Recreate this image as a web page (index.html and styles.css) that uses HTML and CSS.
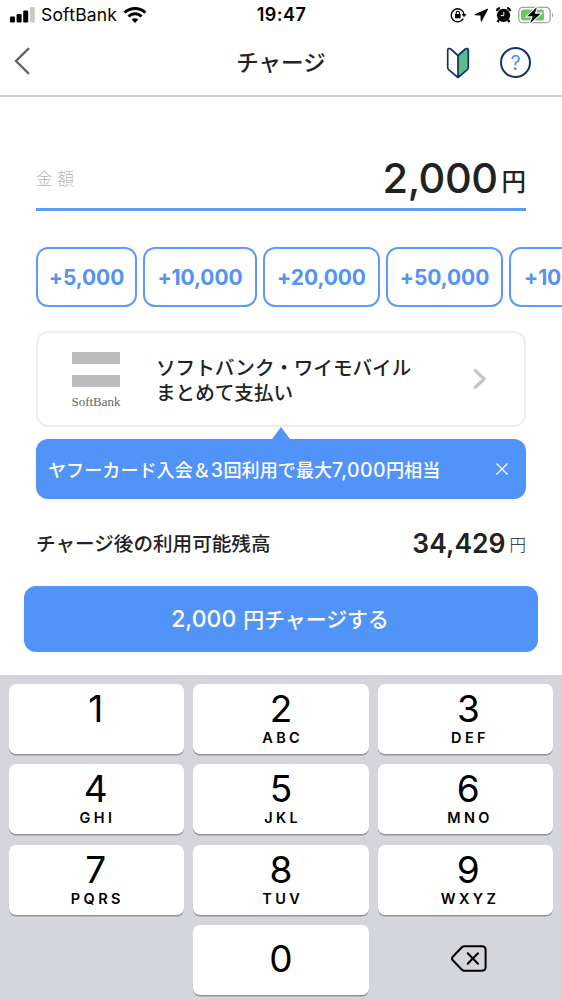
FILE: index.html
```html
<!DOCTYPE html>
<html lang="ja">
<head>
<meta charset="utf-8">
<title>チャージ</title>
<link rel="stylesheet" href="styles.css">
</head>
<body>
<div class="status">
  <div class="status-left">
    <svg width="26" height="16" viewBox="0 0 26 16"><rect x="0" y="9.500" width="5" height="6" rx="1.200"/><rect x="6.600" y="7" width="5" height="8.500" rx="1.200"/><rect x="13.200" y="3.500" width="5" height="12" rx="1.200"/><rect x="19.800" y="0" width="5" height="15.500" rx="1.200" fill="#c9c9c9"/></svg>
    <span class="carrier">SoftBank</span>
    <svg class="wifi" width="24" height="18" viewBox="0 0 24 18" fill="none" stroke="#000" stroke-width="3"><path d="M1.600 6.600a15 15 0 0 1 20.800 0"/><path d="M5.500 10.500a9.300 9.300 0 0 1 13 0"/><path d="M12 17l-3.300-3.400a4.700 4.700 0 0 1 6.600 0z" fill="#000" stroke="none"/></svg>
  </div>
  <div class="clock">19:47</div>
  <div class="status-right">
    <svg width="17" height="16" viewBox="0 0 17 16" fill="none" stroke="#000" stroke-width="1.400"><path d="M13.300 11.600A6.500 6.500 0 1 1 14 6.800"/><path d="M11.500 7h5L14 10.200z" fill="#000" stroke="none"/><rect x="5" y="7" width="5.600" height="4.200" rx=".5" fill="#000" stroke="none"/><path d="M6.200 7.300V5.800a1.600 1.600 0 0 1 3.200 0v1.500" stroke-width="1.100"/></svg>
    <svg class="arrow" width="15" height="15" viewBox="0 0 15 15"><path d="M13.300.7.800 6.300q-.8.600.1.900l5.500.4.400 5.600q.3.900.9.100L14 1.500q.2-1-.7-.8z"/></svg>
    <svg class="alarm" width="15" height="16" viewBox="0 0 15 16"><circle cx="7.500" cy="8.300" r="6.600"/><path d="M1.200 4.200Q.9 1.500 3.900 1.200M13.800 4.200Q14.100 1.500 11.100 1.200M3 13l-1.500 2M12 13l1.500 2" stroke="#000" stroke-width="2.300" fill="none"/><path d="M7.800 4.800v3.800H4.800" stroke="#fff" stroke-width="1" fill="none"/></svg>
    <svg class="battery" width="36" height="18" viewBox="0 0 36 18"><rect x=".8" y="1.300" width="31.400" height="15.400" rx="4.300" fill="#fff" stroke="#a3a3a3" stroke-width="1.300"/><rect x="3" y="3.500" width="23" height="11" rx="2.300" fill="#66c867"/><path d="M34 6.500q2.300 2.500 0 5z" fill="#a3a3a3"/><path class="bolt" d="M19 .9 9.400 10.300h5.300l-2.600 7L22.700 7.700h-6z"/></svg>
  </div>
</div>
<header class="header">
  <svg class="back" width="18" height="30" viewBox="0 0 18 30" fill="none" stroke="#666" stroke-width="2.400"><path d="M16 2.200 3 15l13 12.800"/></svg>
  <h1>チャージ</h1>
  <div class="header-icons">
    <svg width="24" height="32" viewBox="0 0 24 32"><path d="M12 8.500 19.300 2q2.700-1.600 3 1v17.500q0 1.300-1.200 2.400L12 30.500z" fill="#5bbd80"/><path d="M12 8.500 4.700 2Q2 .8 1.700 3v17.500q0 1.300 1.200 2.400L12 30.500l9.100-7.600q1.200-1.100 1.200-2.400V3q-.3-2.200-3-1zM12 8.500v22" fill="none" stroke="#172f70" stroke-width="1.700" stroke-linejoin="round"/></svg>
    <div class="help">?</div>
  </div>
</header>
<main>
  <div class="amount"><span class="amount-label">金額</span><span class="amount-value">2,000<span class="yen">円</span></span></div>
  <div class="chips">
    <div class="chip c5">+5,000</div><div class="chip c10">+10,000</div><div class="chip c20">+20,000</div><div class="chip c20">+50,000</div><div class="chip c100">+10</div>
  </div>
  <div class="card">
    <div class="logo"><i></i><i></i><span>SoftBank</span></div>
    <div class="method">ソフトバンク・ワイモバイル<br>まとめて支払い</div>
    <svg class="next" width="14" height="22" viewBox="0 0 14 22" fill="none" stroke="#c4c4c6" stroke-width="3.200" stroke-linecap="round" stroke-linejoin="round"><path d="m2.200 2.600 9 8.400-9 8.400"/></svg>
  </div>
  <div class="promo"><span>ヤフーカード入会＆<em>3</em>回利用で最大<em>7,000</em>円相当</span>
    <svg width="12" height="12" viewBox="0 0 12 12" stroke="#fff" stroke-width="1.200"><path d="m.5.500 11 11M11.500.500l-11 11"/></svg>
  </div>
  <div class="balance"><span>チャージ後の利用可能残高</span><span class="sum">34,429<small>円</small></span></div>
  <div class="submit"><span class="submit-num">2,000</span>円チャージする</div>
</main>
<div class="keypad">
  <div class="key"><b>1</b></div>
  <div class="key"><b>2</b><span>ABC</span></div>
  <div class="key right"><b>3</b><span>DEF</span></div>
  <div class="key"><b>4</b><span>GHI</span></div>
  <div class="key"><b>5</b><span>JKL</span></div>
  <div class="key right"><b>6</b><span>MNO</span></div>
  <div class="key"><b>7</b><span>PQRS</span></div>
  <div class="key"><b>8</b><span>TUV</span></div>
  <div class="key right"><b>9</b><span>WXYZ</span></div>
  <div></div>
  <div class="key zero"><b>0</b></div>
  <div class="delete"><svg width="36" height="27" viewBox="0 0 36 27" fill="none" stroke="#000" stroke-width="2" stroke-linejoin="round"><path d="M13.500 1.300H31q3.600 0 3.600 3.600v17.200q0 3.600-3.600 3.600H13.500q-1.500 0-2.600-1L1.800 15.200q-1.600-1.700 0-3.400l9.100-9.500q1.100-1 2.600-1z"/><path d="m16.700 8.200 10.300 10.600M27 8.200 16.700 18.800" stroke-linecap="round"/></svg></div>
</div>
</body>
</html>
```
FILE: styles.css
```css
* { box-sizing: border-box; }
body {
  margin: 0;
  width: 562px;
  height: 999px;
  overflow: hidden;
  background: #fff;
  color: #222;
  font-family: Inter, "Noto Sans CJK JP", sans-serif;
}
svg { display: block; flex: none; }
.status {
  height: 30px;
  display: grid;
  grid-template-columns: 1fr auto 1fr;
  align-items: center;
  padding: 0 8px 0 10px;
  color: #000;
}
.status-left, .status-right { display: flex; align-items: center; }
.status-right { justify-content: flex-end; }
.carrier { font-size: 17.5px; line-height: 30px; margin: 0 0 0 5px; letter-spacing: .2px; }
.wifi { margin-left: 6px; }
.clock { font-size: 18px; font-weight: 600; line-height: 30px; letter-spacing: .5px; margin-left: -1px; }
.arrow, .alarm, .battery { margin-left: 7px; }
.bolt { stroke: #fff; stroke-width: 2.2px; paint-order: stroke; }
.header {
  height: 67px;
  border-bottom: 2px solid #d0d0d2;
  display: grid;
  grid-template-columns: 1fr auto 1fr;
  align-items: center;
  padding: 0 31px 0 13px;
}
.back { margin-top: -4px; }
h1 { margin: 0 0 0 18px; font-size: 22.5px; font-weight: 500; line-height: 34px; }
.header-icons { display: flex; justify-content: flex-end; align-items: center; gap: 30px; }
.help {
  width: 31px;
  height: 31px;
  border: 2px solid #172f70;
  border-radius: 50%;
  color: #5492f7;
  font-size: 20px;
  line-height: 28px;
  text-align: center;
}
main { padding: 0 36px; height: 578px; }
.amount {
  height: 114px;
  padding-top: 50px;
  border-bottom: 3px solid #5e9bf8;
  display: flex;
  justify-content: space-between;
}
.amount-label { font-size: 16.5px; line-height: 64px; letter-spacing: 5px; color: #b5b5b5; font-weight: 300; }
.amount-value { font-size: 41.5px; font-weight: 500; line-height: 62px; letter-spacing: -.5px; white-space: nowrap; }
.yen { position: relative; top: -2px; font-size: 24.5px; letter-spacing: 0; margin-left: 4px; }
.chips { display: flex; gap: 6px; margin: 36px -36px 0 0; overflow: hidden; }
.chip {
  flex: none;
  height: 60px;
  border: 2px solid #5e9bf8;
  border-radius: 12px;
  color: #5492f7;
  font-size: 21px;
  font-weight: 700;
  line-height: 58px;
  letter-spacing: -.1px;
  text-align: center;
}
.c5 { width: 101px; }
.c10 { width: 114px; }
.c20 { width: 117px; }
.c100 { width: 53px; padding-left: 13px; border-right: 0; border-radius: 12px 0 0 12px; text-align: left; white-space: nowrap; }
.card {
  height: 96px;
  margin-top: 24px;
  border: 2px solid #eee;
  border-radius: 12px;
  display: flex;
  align-items: center;
  padding: 0 37px 0 33px;
}
.logo { width: 50px; display: flex; flex-direction: column; align-items: center; padding-top: 3px; }
.logo i { width: 48px; height: 12px; background: #bbbcbd; margin-bottom: 11px; }
.logo span { font: 13px/16px "Liberation Serif", serif; color: #666; margin-top: -4px; }
.method { margin: 3px 0 0 35px; font-size: 19.6px; font-weight: 500; line-height: 25px; white-space: nowrap; }
.next { margin-left: auto; }
.promo {
  position: relative;
  height: 60px;
  margin-top: 12px;
  border-radius: 12px;
  background: #5293f7;
  color: #fff;
  display: flex;
  align-items: center;
  justify-content: space-between;
  padding: 0 18px 1px 12px;
  font-size: 18.1px;
  font-weight: 500;
  white-space: nowrap;
}
.promo em { font-style: normal; font-size: 19.5px; letter-spacing: .4px; }
.promo::before {
  content: "";
  position: absolute;
  left: 236px;
  top: -12px;
  border: 9px solid transparent;
  border-top: 0;
  border-bottom: 12px solid #5293f7;
}
.balance {
  height: 87px;
  display: flex;
  justify-content: space-between;
  align-items: center;
  font-size: 19.6px;
  font-weight: 500;
}
.sum { font-size: 26.5px; font-weight: 600; padding-top: 1px; }
.sum small { position: relative; top: -2px; font-size: 16.500px; font-weight: 300; margin-left: 4px; }
.submit {
  height: 66px;
  margin: 0 -12px;
  border-radius: 12px;
  background: #5293f7;
  color: #fff;
  font-size: 20.9px;
  font-weight: 500;
  display: flex;
  align-items: center;
  justify-content: center;
  padding: 0 2px 2px 0;
}
.submit-num { font-size: 23px; margin: 1px 7px 0 0; }
.keypad {
  height: 324px;
  background: #d5d6dc;
  padding: 9px 9px 0;
  display: grid;
  grid-template-columns: repeat(3, 1fr);
  grid-auto-rows: 70px;
  gap: 10.400px 9px;
  color: #000;
}
.key {
  height: 70px;
  border-radius: 7px;
  background: #fff;
  box-shadow: 0 1.500px 0 #929398;
  display: flex;
  flex-direction: column;
  align-items: center;
  padding-right: 2px;
}
.key:nth-child(3n + 2) { padding-right: 0; }
.key.right { padding: 0 0 0 6px; }
.key b { font-size: 37px; font-weight: 400; line-height: 38px; margin-top: 6px; }
.key span { font-size: 14.5px; font-weight: 600; line-height: 16px; letter-spacing: 3.4px; margin: 2px -3.4px 0 0; }
.zero b { margin-top: 15px; }
.delete { display: flex; align-items: center; justify-content: center; padding: 0 0 3px 8px; }
```
